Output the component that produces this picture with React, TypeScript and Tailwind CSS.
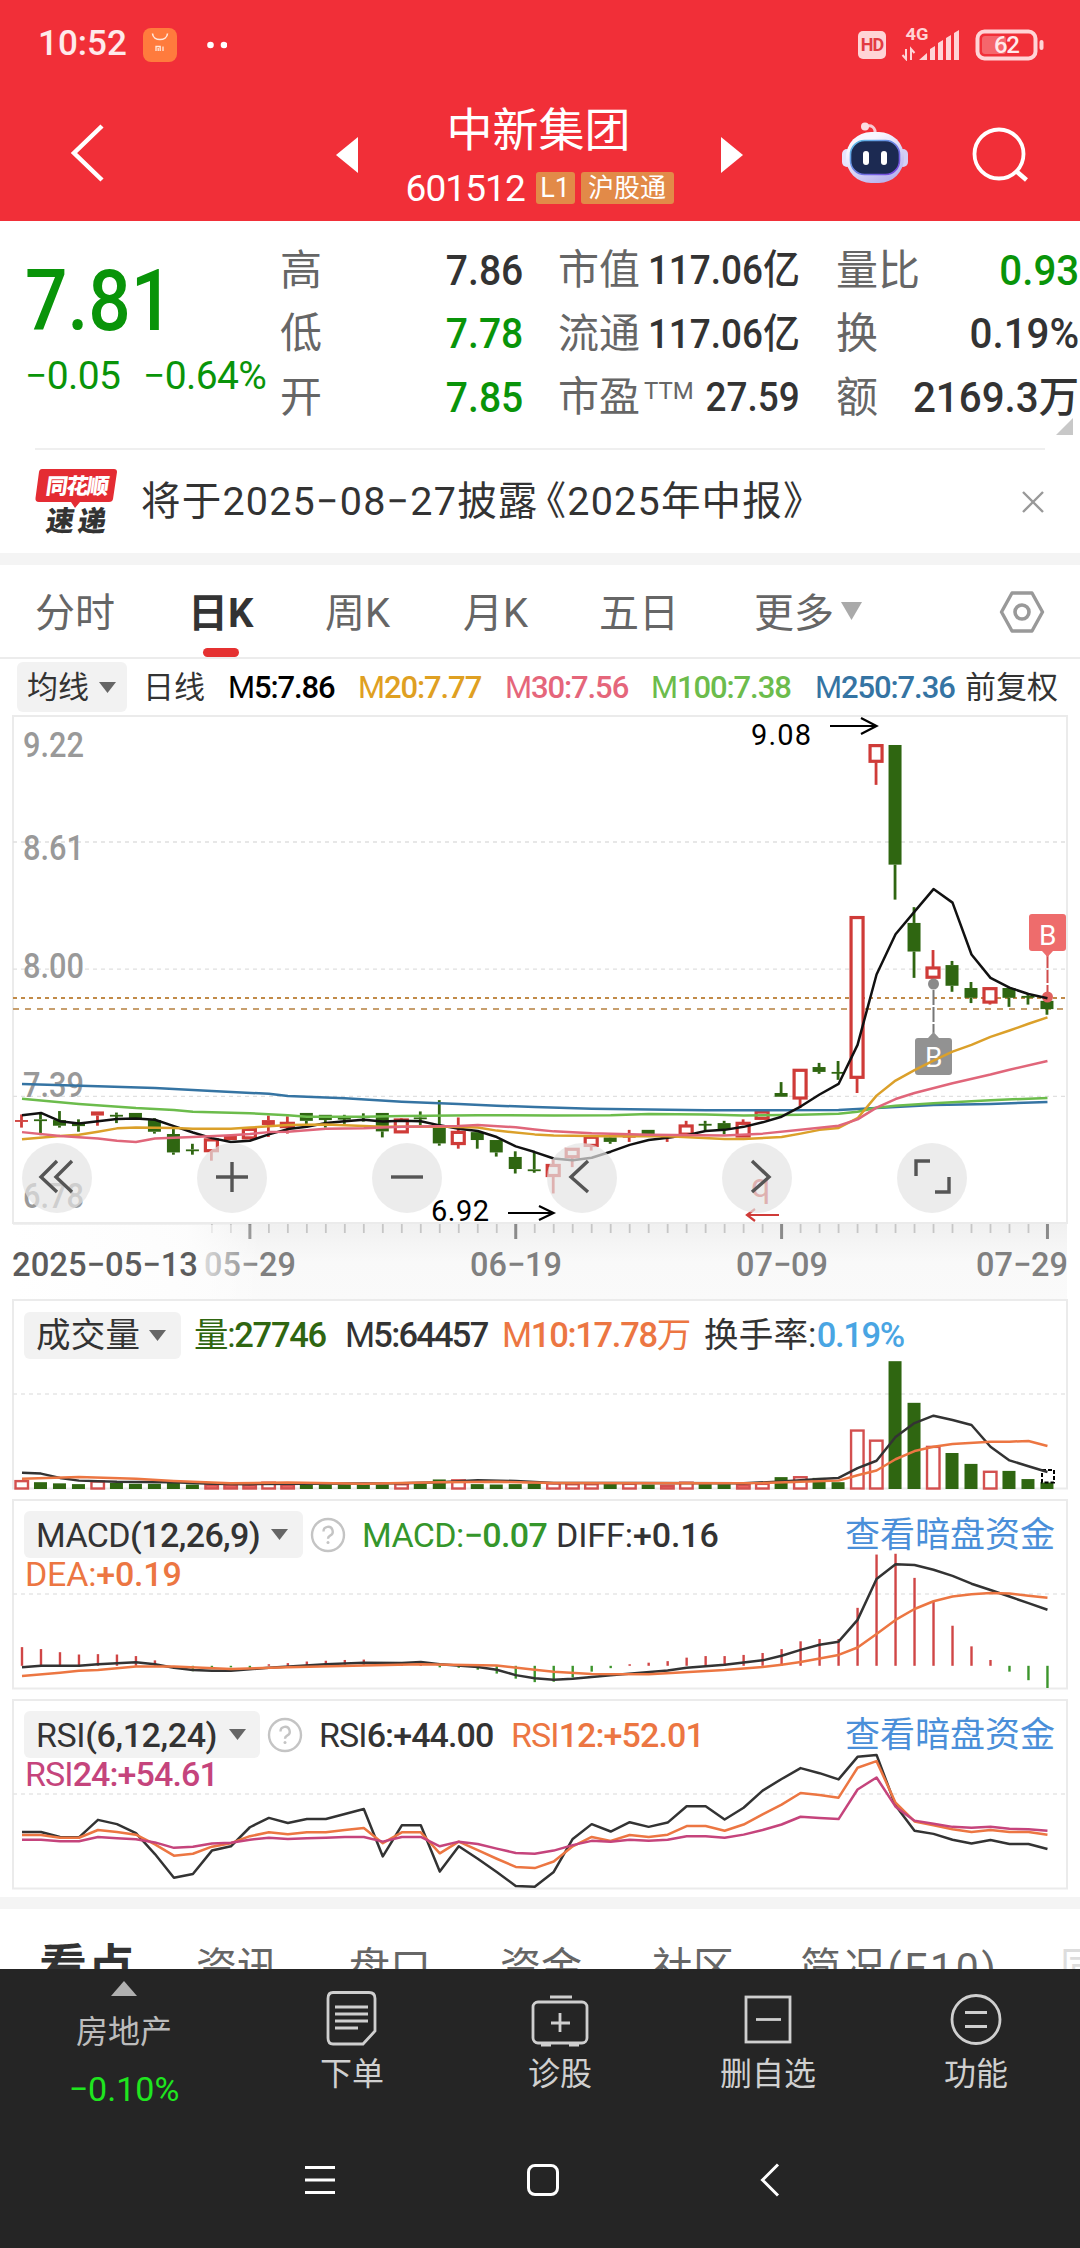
import React from 'react';

const X0 = 22;
const STEP = 18.99;
const RED = '#cf3b38';
const GREEN = '#2f6611';

const px = (i: number) => X0 + STEP * i;
const priceY = (v: number) => 710 + v / 2.658;
const indexY = (v: number) => 1290 + v / 2.5705;

type Point = [number, number];

// [up, high, top, bottom, low]
const candles: [number, number, number, number, number][] = [
    [1, 1075, 1090, 1094, 1110], [0, 1070, 1088, 1091, 1130], [0, 1066, 1090, 1105, 1110],
    [0, 1088, 1098, 1106, 1121], [1, 1067, 1067, 1078, 1105], [0, 1070, 1076, 1079, 1098],
    [0, 1071, 1071, 1086, 1086], [0, 1085, 1090, 1121, 1126], [0, 1110, 1127, 1176, 1182],
    [0, 1153, 1168, 1171, 1182], [1, 1140, 1140, 1174, 1198], [1, 1131, 1131, 1143, 1143],
    [1, 1112, 1112, 1140, 1140], [1, 1078, 1090, 1103, 1135], [1, 1080, 1096, 1110, 1126],
    [0, 1071, 1071, 1092, 1108], [0, 1076, 1076, 1090, 1110], [0, 1076, 1084, 1087, 1100],
    [0, 1072, 1080, 1083, 1094], [0, 1071, 1071, 1120, 1136], [1, 1085, 1087, 1124, 1124],
    [0, 1067, 1083, 1087, 1103], [0, 1037, 1104, 1152, 1158], [1, 1083, 1120, 1155, 1166],
    [0, 1118, 1122, 1143, 1166], [0, 1143, 1143, 1176, 1187], [0, 1173, 1188, 1220, 1232],
    [0, 1175, 1221, 1225, 1230], [1, 1195, 1208, 1240, 1285], [1, 1165, 1165, 1190, 1215],
    [1, 1133, 1133, 1160, 1171], [0, 1134, 1136, 1148, 1153], [1, 1116, 1132, 1136, 1148],
    [0, 1116, 1116, 1130, 1130], [1, 1130, 1132, 1138, 1148], [1, 1092, 1103, 1130, 1130],
    [0, 1092, 1100, 1103, 1118], [0, 1092, 1098, 1115, 1128], [1, 1088, 1096, 1135, 1135],
    [1, 1066, 1066, 1088, 1088], [0, 989, 1018, 1028, 1028], [1, 955, 955, 1034, 1058],
    [0, 938, 949, 962, 967], [0, 933, 962, 965, 983], [1, 549, 549, 979, 1018],
    [1, 92, 92, 139, 199], [0, 93, 93, 411, 504], [0, 524, 566, 642, 712],
    [1, 638, 683, 713, 727], [0, 667, 678, 733, 749], [0, 723, 739, 765, 779],
    [1, 738, 738, 779, 783], [0, 739, 739, 765, 789], [0, 755, 760, 763, 783],
    [0, 773, 773, 795, 810]
];

const ma5: Point[] = [1077, 1071, 1093, 1099, 1093, 1087, 1086, 1089, 1106, 1123, 1138, 1148, 1145, 1128, 1114, 1108, 1098, 1093, 1089, 1094, 1092, 1093, 1104, 1113, 1119, 1135, 1160, 1175, 1192, 1197, 1190, 1174, 1156, 1143, 1137, 1130, 1119, 1116, 1108, 1096, 1081, 1054, 1022, 994, 890, 703, 596, 536, 476, 512, 650, 712, 738, 755, 766].map((v, i) => [i, v]);
const ma20: Point[] = [[0, 1141], [2, 1132], [3, 1129], [4, 1121], [5, 1112], [6, 1110], [8, 1111], [9, 1113], [11, 1113], [12, 1110], [14, 1103], [16, 1102], [18, 1106], [19, 1108], [22, 1107], [24, 1110], [25, 1118], [27, 1128], [28, 1131], [31, 1133], [34, 1133], [37, 1140], [38, 1140], [40, 1135], [41, 1126], [42, 1116], [43, 1111], [44, 1085], [45, 1025], [46, 985], [47, 957], [48, 932], [49, 908], [50, 890], [51, 869], [52, 852], [53, 834], [54, 817]];
const ma30: Point[] = [[0, 1122], [2, 1132], [4, 1139], [5, 1145], [6, 1148], [7, 1139], [9, 1135], [11, 1130], [12, 1127], [13, 1122], [14, 1121], [16, 1113], [18, 1112], [19, 1110], [20, 1108], [23, 1106], [24, 1103], [26, 1109], [27, 1115], [28, 1120], [30, 1125], [33, 1129], [37, 1131], [39, 1126], [41, 1116], [43, 1105], [44, 1088], [45, 1057], [46, 1034], [47, 1018], [49, 992], [51, 969], [52, 956], [54, 933]];
const ma100: Point[] = [[0, 1033], [3, 1047], [6, 1058], [8, 1063], [9, 1068], [12, 1072], [14, 1077], [15, 1081], [18, 1081], [20, 1079], [24, 1077], [28, 1078], [31, 1077], [33, 1074], [36, 1075], [38, 1078], [41, 1076], [43, 1073], [44, 1068], [45, 1057], [46, 1052], [48, 1045], [51, 1037], [54, 1031]];
const ma250: Point[] = [[0, 994], [4, 1000], [7, 1005], [10, 1013], [13, 1020], [14, 1026], [17, 1032], [20, 1041], [23, 1047], [25, 1052], [27, 1055], [30, 1060], [36, 1064], [43, 1063], [46, 1055], [48, 1050], [51, 1047], [54, 1042]];

const volumes = [490, 494, 497, 499, 491, 496, 498, 498, 494, 500, 500, 500, 500, 494, 500, 500, 500, 500, 500, 500, 498, 498, 487, 488, 499, 500, 499, 497, 496, 498, 498, 498, 497, 500, 502, 494, 499, 499, 500, 497, 481, 480, 483, 494, 360, 386, 183, 290, 402, 419, 447, 466, 465, 486, 494];
const vol5: Point[] = [[0, 470], [1, 472], [2, 483], [3, 490], [5, 493], [8, 494], [10, 498], [12, 499], [20, 497], [22, 494], [24, 489], [26, 491], [28, 496], [32, 496], [38, 497], [40, 492], [41, 489], [42, 486], [43, 483], [44, 458], [45, 439], [46, 378], [47, 342], [48, 323], [49, 334], [50, 347], [51, 403], [52, 438], [53, 453], [54, 468]];
const vol10: Point[] = [[0, 485], [3, 481], [6, 485], [8, 491], [11, 497], [14, 495], [18, 498], [22, 494], [25, 493], [28, 496], [35, 497], [39, 496], [41, 493], [43, 490], [44, 476], [45, 464], [46, 435], [47, 414], [48, 403], [49, 396], [51, 390], [52, 390], [53, 388], [54, 401]];

const macdBars = [918, 923, 931, 937, 936, 937, 941, 952, 966, 980, 971, 970, 972, 962, 959, 955, 953, 951, 950, 961, 961, 962, 970, 971, 976, 986, 999, 1008, 1007, 996, 981, 972, 962, 958, 954, 945, 941, 941, 938, 933, 923, 903, 897, 897, 817, 680, 678, 740, 800, 863, 916, 951, 981, 1003, 1023];
const diff: Point[] = [[0, 970], [1, 966], [3, 966], [4, 962], [6, 957], [7, 962], [8, 971], [9, 977], [10, 979], [11, 979], [13, 971], [16, 962], [18, 958], [20, 959], [21, 956], [22, 962], [24, 969], [25, 976], [26, 990], [27, 998], [28, 1002], [29, 999], [31, 990], [34, 978], [35, 971], [37, 963], [39, 952], [40, 940], [41, 925], [42, 912], [43, 904], [44, 848], [45, 743], [46, 705], [47, 707], [48, 719], [49, 735], [50, 755], [51, 771], [52, 788], [53, 805], [54, 822]];
const dea: Point[] = [[0, 992], [2, 984], [3, 979], [4, 977], [6, 968], [8, 968], [11, 974], [14, 970], [18, 965], [21, 962], [25, 965], [27, 976], [28, 981], [30, 987], [33, 988], [37, 977], [39, 969], [40, 963], [41, 956], [42, 947], [43, 938], [44, 919], [45, 884], [46, 848], [47, 820], [48, 800], [49, 788], [50, 782], [51, 779], [52, 780], [53, 786], [54, 791]];

const rsi6: Point[] = [1393, 1393, 1406, 1407, 1362, 1373, 1396, 1450, 1511, 1501, 1441, 1430, 1381, 1357, 1370, 1360, 1360, 1347, 1334, 1456, 1376, 1376, 1495, 1430, 1462, 1496, 1532, 1534, 1496, 1411, 1373, 1392, 1368, 1380, 1369, 1327, 1327, 1361, 1331, 1287, 1257, 1229, 1242, 1258, 1200, 1195, 1325, 1390, 1398, 1413, 1423, 1414, 1424, 1424, 1437].map((v, i) => [i, v]);
const rsi12: Point[] = [1401, 1401, 1408, 1408, 1388, 1393, 1400, 1425, 1454, 1449, 1431, 1422, 1404, 1394, 1399, 1394, 1394, 1388, 1383, 1422, 1394, 1394, 1448, 1418, 1440, 1462, 1483, 1486, 1469, 1430, 1406, 1416, 1401, 1406, 1400, 1378, 1378, 1390, 1374, 1348, 1323, 1293, 1298, 1305, 1228, 1211, 1318, 1366, 1376, 1386, 1393, 1388, 1393, 1393, 1400].map((v, i) => [i, v]);
const rsi24: Point[] = [1413, 1413, 1417, 1417, 1406, 1409, 1412, 1420, 1434, 1431, 1423, 1421, 1413, 1408, 1411, 1409, 1408, 1406, 1406, 1418, 1406, 1406, 1430, 1418, 1424, 1436, 1447, 1449, 1441, 1427, 1416, 1418, 1413, 1416, 1413, 1404, 1404, 1408, 1400, 1388, 1374, 1354, 1357, 1360, 1284, 1253, 1328, 1364, 1372, 1380, 1382, 1380, 1385, 1386, 1390].map((v, i) => [i, v]);

function Line({ data, y, color }: { data: Point[]; y: (v: number) => number; color: string }) {
    return (
        <polyline
            points={data.map(([i, v]) => `${px(i)},${y(v)}`).join(' ')}
            fill="none"
            stroke={color}
            strokeWidth="2.5"
            strokeLinejoin="round"
        />
    );
}

function Candle({ i, c }: { i: number; c: [number, number, number, number, number] }) {
    const [up, high, top, bottom, low] = c;
    const x = px(i) - 0.5;
    const t = priceY(top);
    const b = priceY(bottom);
    const color = up ? RED : GREEN;
    const hollow = up === 1 && b - t > 5;
    return (
        <g>
            {high < top && <line x1={x} x2={x} y1={priceY(high)} y2={t} stroke={color} strokeWidth="2.8" />}
            {low > bottom && <line x1={x} x2={x} y1={b} y2={priceY(low)} stroke={color} strokeWidth="2.8" />}
            {hollow ? (
                <rect x={x - 6} y={t + 1} width="12" height={b - t - 2} fill="#fff" stroke={color} strokeWidth="3.2" />
            ) : (
                <rect x={x - 6.5} y={t} width="13" height={Math.max(b - t, 1.8)} fill={color} />
            )}
        </g>
    );
}

function Frame({ y, h, grid }: { y: number; h: number; grid: number }) {
    return (
        <g>
            <rect x="13" y={y} width="1054" height={h} fill="none" stroke="#ebebeb" strokeWidth="2" />
            <line x1="13" x2="1066" y1={grid} y2={grid} stroke="#e6e6e6" strokeWidth="1.5" strokeDasharray="4 4" />
        </g>
    );
}

function Caret({ className = '' }: { className?: string }) {
    return (
        <svg viewBox="0 0 17 11" className={`w-[17px] h-[11px] ${className}`}>
            <path d="M0 0h17L8.5 11z" fill="#666" />
        </svg>
    );
}

function Help() {
    return (
        <svg viewBox="0 0 36 36" className="w-9 h-9 shrink-0">
            <circle cx="18" cy="18" r="16" fill="none" stroke="#c4c4c4" strokeWidth="2.4" />
            <path d="M13.5 14.5a4.6 4.6 0 1 1 6.6 4.1c-1.5.8-2.1 1.5-2.1 3.2" fill="none" stroke="#c4c4c4" strokeWidth="2.4" />
            <circle cx="18" cy="25.5" r="1.5" fill="#c4c4c4" />
        </svg>
    );
}

function StatusBar() {
    return (
        <div className="flex items-center h-[88px] pl-[38px] pt-px text-white/90">
            <span className="w-[105px] text-[35px] font-medium">10:52</span>
            <svg viewBox="0 0 34 34" className="w-[34px] h-[34px]">
                <rect width="34" height="34" rx="8" fill="#ff7b3d" />
                <path d="M9.5 5.5c.5 8 14.5 8 15 0" fill="none" stroke="#ffe9dd" strokeWidth="1.6" />
                <path d="M13 23v-4.5h4.2V23M15.2 20v3M20 18.5V23" fill="none" stroke="#ffe9dd" strokeWidth="1.3" />
            </svg>
            <svg viewBox="0 0 20 8" className="w-5 h-2 ml-[30px]">
                <circle cx="3.5" cy="4" r="3.3" fill="#fff" />
                <circle cx="17" cy="4" r="3.3" fill="#fff" />
            </svg>
            <div className="ml-[631px] w-7 h-7 rounded-[5px] bg-[#ffd4d6] text-[#e33b42] text-[18px] font-bold flex items-center justify-center leading-none tracking-[-1px]">HD</div>
            <svg viewBox="0 0 62 36" className="w-[62px] h-9 ml-[15px] -mt-1">
                <text x="4.5" y="15" fontFamily="Roboto, sans-serif" fontWeight="700" fontSize="16.5" textLength="23" lengthAdjust="spacingAndGlyphs" fill="#ffd4d6">4G</text>
                <path d="M5 24v10l-3.5-4M10 35V24l3.5 4" fill="none" stroke="#ffd4d6" strokeWidth="2" />
                <path d="M18 35l8-7v7zM29 24l5-3v14h-5zM37 18l5-3v20h-5zM45 13l5-3v25h-5zM53 8l5-3v30h-5z" fill="#ffd4d6" />
            </svg>
            <svg viewBox="0 0 70 32" className="w-[70px] h-8 ml-[12px]">
                <rect x="2.5" y="2.5" width="58" height="27" rx="7" fill="none" stroke="#ffd4d6" strokeWidth="4" />
                <rect x="7" y="7" width="24" height="18" rx="3" fill="#f5666c" />
                <rect x="64.5" y="11" width="4" height="10" rx="2" fill="#ffd4d6" />
                <text x="19" y="24" fontFamily="Roboto, sans-serif" fontWeight="500" fontSize="24" textLength="26" fill="#ffe9ea">62</text>
            </svg>
        </div>
    );
}

function Robot() {
    return (
        <svg viewBox="0 0 66 64" className="w-[66px] h-16">
            <defs>
                <linearGradient id="shell" x1="0" y1="0" x2="0.6" y2="1">
                    <stop offset="0.3" stopColor="#f8f6ff" />
                    <stop offset="1" stopColor="#b9b4ee" />
                </linearGradient>
                <linearGradient id="rim" x1="0" y1="0" x2="1" y2="1">
                    <stop offset="0" stopColor="#5fc3e8" />
                    <stop offset="1" stopColor="#7a3fe0" />
                </linearGradient>
            </defs>
            <path d="M23 6c6-3 11 0 10 8" fill="none" stroke="#f7c9d2" strokeWidth="3" />
            <circle cx="23" cy="5.5" r="4" fill="#fbdde3" />
            <rect x="0" y="28" width="10" height="18" rx="5" fill="#e6e3fb" />
            <rect x="56" y="28" width="10" height="18" rx="5" fill="#d3cff5" />
            <rect x="4" y="11" width="58" height="51" rx="25" fill="url(#shell)" />
            <rect x="8.5" y="19.5" width="49" height="34" rx="14" fill="#1c2a52" stroke="url(#rim)" strokeWidth="1.6" />
            <rect x="21" y="30" width="6" height="14" rx="3" fill="#fff" />
            <rect x="39" y="30" width="6" height="14" rx="3" fill="#fff" />
        </svg>
    );
}

function Header() {
    return (
        <div className="flex h-[133px] text-white">
            <div className="w-[336px] pl-[70px] pt-[35px]">
                <svg viewBox="0 0 36 60" className="w-9 h-[60px]">
                    <path d="M32 3L4 30l28 27" fill="none" stroke="#fff" strokeWidth="4.5" />
                </svg>
            </div>
            <svg viewBox="0 0 22 36" className="w-[22px] h-9 mt-[49px]"><path d="M22 0v36L0 18z" fill="#fff" /></svg>
            <div className="w-[363px] flex flex-col items-center">
                <div className="text-[46px] leading-[60px] mt-3 -ml-0.5">中新集团</div>
                <div className="flex items-center h-8 mt-3">
                    <span className="text-[37px] tracking-[-0.9px] leading-8 w-[130px] mt-0.5">601512</span>
                    <span className="w-[39px] h-8 rounded-[3px] bg-[#e28a48] text-[27px] leading-8 text-center">L1</span>
                    <span className="w-[93px] h-8 ml-1.5 rounded-[3px] bg-[#e28a48] text-[26px] leading-[32px] text-center">沪股通</span>
                </div>
            </div>
            <svg viewBox="0 0 22 36" className="w-[22px] h-9 mt-[49px]"><path d="M0 0v36l22-18z" fill="#fff" /></svg>
            <div className="ml-[99px] mt-[33px]"><Robot /></div>
            <svg viewBox="0 0 58 58" className="w-[58px] h-[58px] ml-[63px] mt-[37px]">
                <circle cx="28" cy="29" r="24.5" fill="none" stroke="#fff" strokeWidth="3.8" />
                <path d="M44.5 45.5l11 9.5" stroke="#fff" strokeWidth="4.5" />
            </svg>
        </div>
    );
}

const quotes = [
    { a: '高', av: '7.86', ac: 'text-[#333]', b: '市值', bv: '117.06亿', c: '量比', cv: '0.93', cc: 'text-[#099409]' },
    { a: '低', av: '7.78', ac: 'text-[#099409]', b: '流通', bv: '117.06亿', c: '换', cv: '0.19%', cc: 'text-[#333]' },
    { a: '开', av: '7.85', ac: 'text-[#099409]', b: '市盈', bv: '27.59', c: '额', cv: '2169.3万', cc: 'text-[#333]' }
];

function Quote() {
    return (
        <div className="relative h-[227px] flex pl-[25px]">
            <div className="w-[255px] text-[#099409] whitespace-nowrap font-medium">
                <div className="w-[170px] text-[86px] leading-[86px] mt-[37px] origin-left scale-x-[0.87]">7.81</div>
                <div className="flex text-[39px] leading-10 tracking-[-0.6px] mt-[12px] font-normal">
                    <span className="w-[118px]">−0.05</span>
                    <span>−0.64%</span>
                </div>
            </div>
            <div className="w-[799px] mt-[18px]">
                {quotes.map(q => (
                    <div key={q.a} className="flex h-[63.5px] items-center whitespace-nowrap text-[42px] leading-none text-[#666]">
                        <span className="w-[80px] shrink-0">{q.a}</span>
                        <span className="w-[163px] shrink-0 flex justify-end"><b className={`font-medium origin-right scale-x-[0.93] ${q.ac}`}>{q.av}</b></span>
                        <span className="relative w-[242px] shrink-0 ml-[35px] mr-[36px] flex items-center text-[41px]">
                            {q.b}
                            {q.b === '市盈' && <span className="text-[24px] ml-1 -mt-3.5">TTM</span>}
                            <b className="absolute right-0 font-medium text-[#333] text-[41px] origin-right scale-x-[0.9]">{q.bv}</b>
                        </span>
                        <span className="w-[85px] shrink-0">{q.c}</span>
                        <span className="w-[158px] shrink-0 flex justify-end"><b className={`font-medium origin-right scale-x-[0.96] ${q.cc}`}>{q.cv}</b></span>
                    </div>
                ))}
            </div>
            <svg viewBox="0 0 17 17" className="absolute right-[7px] bottom-[13px] w-[17px] h-[17px]"><path d="M17 0v17H0z" fill="#c8c8c8" /></svg>
        </div>
    );
}

function News() {
    return (
        <div className="mx-[35px] h-[105px] border-t-2 border-[#efefef] flex items-center">
            <svg viewBox="0 0 82 68" className="w-[82px] h-[68px]">
                <path d="M7 1h72q3 0 3 3l-4 27q-.5 3-4 3H45l-5 6-4-6H4q-4 0-3.5-4L4 4q.5-3 3-3z" fill="#e42c33" />
                <g fontFamily="'Noto Sans CJK SC', sans-serif" fontWeight="900">
                    <text transform="translate(10 26) skewX(-8)" fontSize="22" textLength="63" fill="#fff">同花顺</text>
                    <text transform="translate(10 63) skewX(-8)" fontSize="28" textLength="60" fill="#333">速递</text>
                </g>
            </svg>
            <span className="ml-[24px] text-[39.5px] leading-none text-[#333] tracking-[1.2px] whitespace-nowrap">
                将于2025−08−27披露<span className="-ml-3">《2025年中报》</span>
            </span>
            <svg viewBox="0 0 24 24" className="w-6 h-6 ml-auto"><path d="M2 2l20 20M22 2L2 22" stroke="#999" strokeWidth="2.4" /></svg>
        </div>
    );
}

function PeriodTabs() {
    return (
        <div className="relative grid grid-cols-[153px_137px_138px_136px_155px_231px_auto] items-center h-[94px] pt-1.5 pl-[35px] border-b-2 border-[#ececec] text-[40px] leading-none text-[#666]">
            <span>分时</span>
            <span className="font-bold text-[#333]">日K</span>
            <span>周K</span>
            <span>月K</span>
            <span>五日</span>
            <span className="flex items-center">
                更多
                <svg viewBox="0 0 21 18" className="w-[21px] h-[18px] ml-[7px] -mt-1.5"><path d="M0 0h21L10.5 18z" fill="#aaa" /></svg>
            </span>
            <svg viewBox="0 0 46 44" className="w-[46px] h-11 ml-[14px] -mt-1">
                <path d="M13 3h20l10.5 19L33 41H13L2.5 22z" fill="none" stroke="#999" strokeWidth="3.4" strokeLinejoin="round" />
                <circle cx="23" cy="22" r="7" fill="none" stroke="#999" strokeWidth="3.6" />
            </svg>
            <span className="absolute left-[203px] bottom-0 w-9 h-[9px] rounded-[5px] bg-[#e53131]" />
        </div>
    );
}

const averages = [
    { name: 'M', value: '5:7.86', cls: 'w-[130px] text-black' },
    { name: 'M', value: '20:7.77', cls: 'w-[147px] text-[#dfa022]' },
    { name: 'M', value: '30:7.56', cls: 'w-[146px] text-[#e5667b]' },
    { name: 'M', value: '100:7.38', cls: 'w-[164px] text-[#6cbc4c]' },
    { name: 'M', value: '250:7.36', cls: 'w-[150px] text-[#3574a3]' }
];

function MaRow() {
    return (
        <div className="flex items-center h-[56px] pl-[17px] whitespace-nowrap text-[31px] leading-none text-[#333]">
            <div className="flex items-center w-[110px] h-[50px] pl-[10px] rounded-md bg-[#f2f2f2]">
                均线<Caret className="ml-[10px]" />
            </div>
            <span className="ml-4 w-[85px]">日线</span>
            {averages.map(a => (
                <span key={a.value} className={`tracking-[-1.1px] ${a.cls}`}>{a.name}<b className="font-medium">{a.value}</b></span>
            ))}
            <span>前复权</span>
        </div>
    );
}

const priceLabels: [string, number][] = [['9.22', 757], ['8.61', 860], ['8.00', 978], ['7.39', 1097], ['6.78', 1208]];

function KLine() {
    return (
        <div className="relative h-[585px]">
            <svg viewBox="0 715 1080 585" className="block w-[1080px] h-[585px]" fontFamily="Roboto, sans-serif">
                <defs>
                    <linearGradient id="axis" x1="0" y1="0" x2="0" y2="1">
                        <stop offset="0" stopColor="#f0f0f0" />
                        <stop offset="0.5" stopColor="#f9f9f9" />
                        <stop offset="1" stopColor="#fafafa" />
                    </linearGradient>
                    <linearGradient id="fade" x1="0" y1="0" x2="1" y2="0">
                        <stop offset="0" stopColor="#fff" />
                        <stop offset="0.7" stopColor="#fdfdfd" stopOpacity="0.95" />
                        <stop offset="1" stopColor="#fff" stopOpacity="0" />
                    </linearGradient>
                </defs>
                <rect x="13" y="1224" width="1054" height="76" fill="url(#axis)" />
                <rect x="13" y="716" width="1054" height="507" fill="#fff" stroke="#ebebeb" strokeWidth="2" />
                {[842, 969.2, 1096.4].map(y => (
                    <line key={y} x1="13" x2="1066" y1={y} y2={y} stroke="#e0e0e0" strokeWidth="1.3" strokeDasharray="4 4" />
                ))}
                {priceLabels.map(([t, y]) => (
                    <text key={t} x="23" y={y} fontSize="35" textLength="61" lengthAdjust="spacingAndGlyphs" fill="#999" fontWeight="500">{t}</text>
                ))}
                <line x1="13" x2="1066" y1="998" y2="998" stroke="#c18a48" strokeWidth="2" strokeDasharray="4 4" />
                <line x1="13" x2="1066" y1="1009" y2="1009" stroke="#c79f6e" strokeWidth="2" strokeDasharray="6 6" />

                {candles.map((c, i) => <Candle key={i} i={i} c={c} />)}

                <circle cx="1047.5" cy="997" r="5.5" fill="#e0605f" />
                <line x1="1047.5" x2="1047.5" y1="955" y2="992" stroke="#cf4b4b" strokeWidth="2" strokeDasharray="13 2" />
                <path d="M1032 914h31q3 0 3 3v31q0 3-3 3h-10l-5.5 6-5.5-6h-10q-3 0-3-3v-31q0-3 3-3z" fill="#ee6c6c" />
                <text x="1039" y="944.5" fontSize="28" fill="#fff">B</text>

                <circle cx="933.5" cy="984" r="5.5" fill="#8a8a8a" />
                <line x1="933.5" x2="933.5" y1="990" y2="1033" stroke="#777" strokeWidth="2" strokeDasharray="15 2" />
                <path d="M918 1038h10l5.5-6 5.5 6h10q3 0 3 3v31q0 3-3 3h-31q-3 0-3-3v-31q0-3 3-3z" fill="#929292" />
                <text x="925" y="1067" fontSize="28" fill="#fff">B</text>

                <Line data={ma250} y={priceY} color="#3574a3" />
                <Line data={ma100} y={priceY} color="#6cbc4c" />
                <Line data={ma5} y={priceY} color="#111" />
                <Line data={ma20} y={priceY} color="#dba02a" />
                <Line data={ma30} y={priceY} color="#e0667a" />

                <text x="751" y="745" fontSize="29" textLength="60">9.08</text>
                <path d="M830 726h46M861 718l15.5 8-15.5 8" fill="none" stroke="#000" strokeWidth="2.2" />
                <text x="431" y="1220.5" fontSize="29" textLength="58">6.92</text>
                <path d="M508 1213h45M539 1206l14.5 7-14.5 7" fill="none" stroke="#000" strokeWidth="2.2" />
                <text x="751" y="1197" fontSize="34" fill={RED}>q</text>
                <path d="M779 1215h-32M755 1209l-8 6 8 6" fill="none" stroke={RED} strokeWidth="2.2" />

                {candles.map((_, i) => {
                    if (i < 10) return null;
                    const major = i === 12 || i === 26 || i === 40 || i === 54;
                    return (
                        <line key={i} x1={px(i)} x2={px(i)} y1="1224" y2={major ? 1239 : 1233} stroke={major ? '#8a8a8a' : '#c6c6c6'} strokeWidth={major ? 3 : 1.8} />
                    );
                })}
                <g fontSize="34" fontWeight="500" fill="#808080">
                    <text x="204" y="1275.5" textLength="92" lengthAdjust="spacingAndGlyphs">05−29</text>
                    <rect x="13" y="1225" width="247" height="74" fill="url(#fade)" />
                    <text x="470" y="1275.5" textLength="92" lengthAdjust="spacingAndGlyphs">06−19</text>
                    <text x="736" y="1275.5" textLength="92" lengthAdjust="spacingAndGlyphs">07−09</text>
                    <text x="976" y="1275.5" textLength="92" lengthAdjust="spacingAndGlyphs">07−29</text>
                    <text x="12" y="1275.5" textLength="186" lengthAdjust="spacingAndGlyphs" fill="#5c5c5c">2025−05−13</text>
                </g>
            </svg>

            <div className="absolute left-[22px] top-[428px] flex gap-[105px]">
                {[
                    'M35 18L19 34l16 15M50 18L34 34l16 15',
                    'M19 34h32M35 19v30',
                    'M19 34h32',
                    'M41 18L24 34l17 15',
                    'M30 18l17 16-17 15',
                    'M33 18H19v15M38 49h14V34'
                ].map(d => (
                    <svg key={d} viewBox="0 0 70 70" className="w-[70px] h-[70px]">
                        <circle cx="35" cy="35" r="35" fill="#e4e4e4" fillOpacity="0.7" />
                        <path d={d} fill="none" stroke="#555" strokeWidth="3.4" />
                    </svg>
                ))}
            </div>
        </div>
    );
}

function VolumePanel() {
    return (
        <div className="relative h-[200px]">
            <svg viewBox="0 1299 1080 200" className="absolute inset-0 w-[1080px] h-[200px]">
                <Frame y={1300} h={188.5} grid={1394} />
                {volumes.map((v, i) => {
                    const x = px(i) - 0.5;
                    const t = indexY(v);
                    const h = 1489 - t;
                    return candles[i][0] ? (
                        <rect key={i} x={x - 6} y={t + 0.5} width="12.5" height={h - 1} fill={h > 5 ? '#fff' : '#f06a66'} stroke="#d3504f" strokeWidth="2.4" />
                    ) : (
                        <rect key={i} x={x - 6.5} y={t} width="13" height={h} fill={GREEN} />
                    );
                })}
                <rect x="1042" y="1470" width="12" height="12.5" fill="#fff" stroke="#000" strokeWidth="2" strokeDasharray="4 2" />
                <Line data={vol5} y={indexY} color="#333" />
                <Line data={vol10} y={indexY} color="#ec7642" />
            </svg>
            <div className="relative flex items-center pl-6 pt-[13px] whitespace-nowrap text-[34.5px] leading-none tracking-[-1.3px] text-[#333]">
                <div className="flex items-center w-[157px] h-[47px] pl-[12px] rounded-md bg-[#f2f2f2] tracking-[0.3px]">
                    成交量<Caret className="ml-[9px]" />
                </div>
                <span className="ml-[13px] w-[151px] text-[#2f6611]">量:<b className="font-medium">27746</b></span>
                <span className="w-[157px] tracking-[-1.8px]">M<b className="font-medium">5:64457</b></span>
                <span className="w-[202px] text-[#ec7642]">M<b className="font-medium">10:17.78</b>万</span>
                <span className="tracking-[0.2px]">换手率:</span>
                <span className="text-[#49a5e3] font-medium">0.19%</span>
            </div>
        </div>
    );
}

function MacdPanel() {
    return (
        <div className="relative h-[200px]">
            <svg viewBox="0 1499 1080 200" className="absolute inset-0 w-[1080px] h-[200px]">
                <Frame y={1500} h={188.5} grid={1594} />
                {macdBars.map((v, i) => (
                    <line key={i} x1={px(i)} x2={px(i)} y1={indexY(966)} y2={indexY(v)} stroke={v < 966 ? '#d04646' : '#3c952c'} strokeWidth="2.4" />
                ))}
                <Line data={diff} y={indexY} color="#333" />
                <Line data={dea} y={indexY} color="#ec7642" />
            </svg>
            <div className="relative flex items-center pl-6 pt-[12px] whitespace-nowrap text-[34px] leading-none tracking-[-0.6px] text-[#333]">
                <div className="flex items-center w-[279px] h-[47px] pl-[12px] rounded-md bg-[#f2f2f2]">
                    <span className="w-[235px]">MACD<b className="font-medium">(12,26,9)</b></span><Caret />
                </div>
                <span className="ml-[7px]"><Help /></span>
                <span className="ml-[16px] w-[194px] text-[#35962b]">MACD:<b className="font-medium">−0.07</b></span>
                <span className="tracking-[-0.1px]">DIFF:<b className="font-medium">+0.16</b></span>
                <span className="ml-auto mr-[25px] mt-0.5 text-[35px] tracking-normal text-[#4a8fd9]">查看暗盘资金</span>
            </div>
            <div className="relative -mt-px pl-[25px] text-[34px] leading-[34px] tracking-[-0.2px] text-[#ec7642]">DEA:<b className="font-medium">+0.19</b></div>
        </div>
    );
}

function RsiPanel() {
    return (
        <div className="relative h-[198px]">
            <svg viewBox="0 1699 1080 198" className="absolute inset-0 w-[1080px] h-[198px]">
                <Frame y={1700} h={188.5} grid={1794} />
                <Line data={rsi6} y={indexY} color="#333" />
                <Line data={rsi12} y={indexY} color="#ec7642" />
                <Line data={rsi24} y={indexY} color="#c5447c" />
            </svg>
            <div className="relative flex items-center pl-6 pt-[12px] whitespace-nowrap text-[34px] leading-none tracking-[-0.9px] text-[#333]">
                <div className="flex items-center w-[236px] h-[47px] pl-[12px] rounded-md bg-[#f2f2f2]">
                    <span className="w-[193px] tracking-[-0.4px]">RSI<b className="font-medium">(6,12,24)</b></span><Caret />
                </div>
                <span className="ml-[7px]"><Help /></span>
                <span className="ml-[16px] w-[192px]">RSI<b className="font-medium">6:+44.00</b></span>
                <span className="text-[#ec7642]">RSI<b className="font-medium">12:+52.01</b></span>
                <span className="ml-auto mr-[25px] mt-0.5 text-[35px] tracking-normal text-[#4a8fd9]">查看暗盘资金</span>
            </div>
            <div className="relative -mt-px pl-[25px] text-[34px] leading-[34px] tracking-[-0.9px] text-[#c5447c]">RSI<b className="font-medium">24:+54.61</b></div>
        </div>
    );
}

function InfoTabs() {
    return (
        <div className="h-[60px] overflow-hidden">
            <div className="grid grid-cols-[157px_153px_151px_152px_148px_260px_auto] items-center h-[118px] pl-[39px] text-[41px] leading-none text-[#666] whitespace-nowrap">
                <span className="text-[48px] font-bold text-[#333]">看点</span>
                <span>资讯</span>
                <span>盘口</span>
                <span>资金</span>
                <span>社区</span>
                <span className="tracking-[2.8px]">简况(F10)</span>
                <span className="text-[#ddd]">同</span>
            </div>
        </div>
    );
}

const actions = [
    { label: '下单', icon: <><path d="M10 2.5h36q6 0 6 6V41L40 54H10q-5 0-5-6V8.5q0-6 5-6z" /><path d="M12 17h33M12 24h33M12 31h33M12 38h23" /></> },
    { label: '诊股', icon: <><rect x="2" y="12" width="54" height="41" rx="5" /><path d="M19 7h22M29 23v19M20 33h19M10 55h10M38 55h10" /></> },
    { label: '删自选', icon: <><rect x="7" y="7" width="44" height="45" /><path d="M17 29.5h25" /></> },
    { label: '功能', icon: <><circle cx="29" cy="29.5" r="24" /><path d="M18 22.5h22M18 36.5h22" /></> }
];

function BottomBar() {
    return (
        <div className="h-[279px] bg-[#252525] text-[#d0d0d0] text-[32px] leading-none">
            <div className="flex h-[150px]">
                <div className="w-[248px] flex flex-col items-center">
                    <svg viewBox="0 0 26 15" className="w-[26px] h-[15px] mt-[12px]"><path d="M13 0l13 15H0z" fill="#b0b0b0" /></svg>
                    <span className="mt-5 text-[#bcbcbc]">房地产</span>
                    <span className="mt-6 text-[34px] text-[#1fe61f]">−0.10%</span>
                </div>
                {actions.map(a => (
                    <div key={a.label} className="w-[208px] flex flex-col items-center">
                        <svg viewBox="0 0 58 58" className="w-[58px] h-[58px] mt-[21px]" fill="none" stroke="#cfcfcf" strokeWidth="2.8">{a.icon}</svg>
                        <span className="mt-[10px]">{a.label}</span>
                    </div>
                ))}
            </div>
            <div className="flex items-center h-[122px] pl-[303px]">
                <svg viewBox="0 0 34 34" className="w-[34px] h-[34px]"><path d="M2 4.5h30M2 17h30M2 29.5h30" stroke="#fff" strokeWidth="3" /></svg>
                <svg viewBox="0 0 34 34" className="w-[34px] h-[34px] ml-[189px]"><rect x="2.5" y="2.5" width="29" height="29" rx="6.5" fill="none" stroke="#fff" strokeWidth="3" /></svg>
                <svg viewBox="0 0 34 34" className="w-[34px] h-[34px] ml-[192px]"><path d="M26 1.5L10.5 17 26 32.5" fill="none" stroke="#fff" strokeWidth="3" /></svg>
            </div>
        </div>
    );
}

export default function App() {
    return (
        <div className="w-[1080px] h-[2248px] overflow-hidden bg-white font-[Roboto,'Noto_Sans_CJK_SC',sans-serif]">
            <div className="bg-[#f12f38] h-[221px]">
                <StatusBar />
                <Header />
            </div>
            <Quote />
            <News />
            <div className="h-3 bg-[#f4f4f4]" />
            <PeriodTabs />
            <MaRow />
            <KLine />
            <div className="-mt-px">
                <VolumePanel />
                <MacdPanel />
                <RsiPanel />
            </div>
            <div className="h-3 bg-[#f4f4f4]" />
            <InfoTabs />
            <BottomBar />
        </div>
    );
}
